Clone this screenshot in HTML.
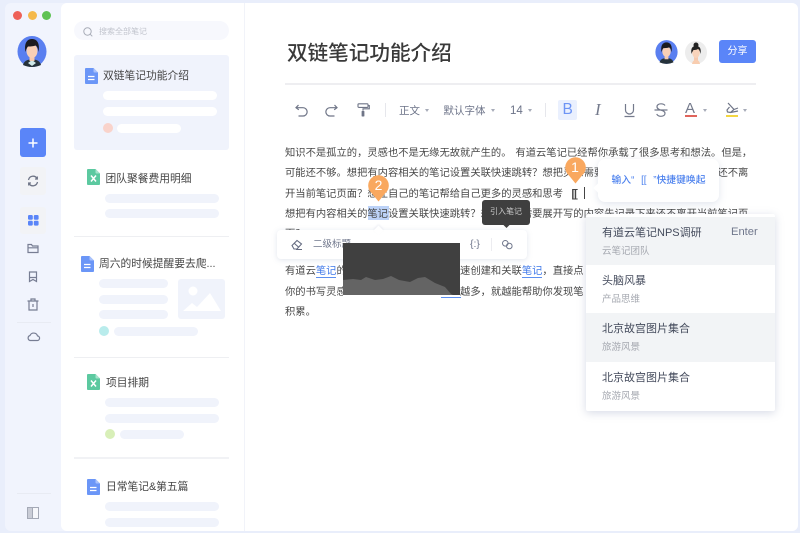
<!DOCTYPE html>
<html lang="zh"><head><meta charset="utf-8"><title>双链笔记功能介绍</title>
<style>
*{box-sizing:border-box;margin:0;padding:0}
html,body{width:800px;height:533px;overflow:hidden;background:#e9eefb}
body{position:relative;font-family:"Liberation Sans","Noto Sans CJK SC",sans-serif;color:#444}
.a{position:absolute}
.t{position:absolute;white-space:nowrap}
.bar{position:absolute;height:9px;border-radius:5px;background:#f0f3fb}
.bw{background:#fff}
.dot{position:absolute;width:10px;height:10px;border-radius:50%}
.name{position:absolute;white-space:nowrap;font-size:10.75px;line-height:16px;color:#444}
.hr{position:absolute;left:74px;width:155px;height:1px;background:#eeeff2}
.doc{position:absolute}
.l{position:absolute;left:285px;white-space:nowrap;font-size:10.3px;line-height:16px;color:#484848}
.lk{color:#3f78e8;border-bottom:1px solid #5c8ff0}
.tb{position:absolute;white-space:nowrap;font-size:10.5px;line-height:14px;color:#6c7388}
.tri{display:inline-block;width:0;height:0;border:2.5px solid transparent;border-top:3.5px solid #a6abb8;border-bottom:0;margin-left:5px;vertical-align:2px}
.mi{position:absolute;left:586px;width:189px;height:49px}
.m1{position:absolute;left:16px;top:8px;white-space:nowrap;font-size:11px;line-height:16px;color:#444b5c}
.m2{position:absolute;left:16px;top:28px;white-space:nowrap;font-size:9.5px;line-height:13px;color:#a5a8b0}
svg{display:block;overflow:visible}
</style></head><body>

<!-- window -->
<div class="a" style="left:5px;top:3px;width:793px;height:528px;background:#f1f4fd;border-radius:6px"></div>
<div class="a" style="left:61px;top:3px;width:184px;height:528px;background:#fff;border-radius:6px 0 0 6px"></div>
<div class="a" style="left:245px;top:3px;width:553px;height:528px;background:#fff;border-radius:0 6px 6px 0"></div>
<div class="a" style="left:244px;top:3px;width:1px;height:528px;background:#f1f3f9"></div>

<!-- traffic lights -->
<div class="a" style="left:13px;top:11px;width:9px;height:9px;border-radius:50%;background:#ee6158"></div>
<div class="a" style="left:27.5px;top:11px;width:9px;height:9px;border-radius:50%;background:#f5b94b"></div>
<div class="a" style="left:42px;top:11px;width:9px;height:9px;border-radius:50%;background:#5fc254"></div>

<!-- avatar -->
<svg class="a" style="left:17px;top:36px" width="30" height="31" viewBox="0 0 30 31">
<ellipse cx="15" cy="15.5" rx="14.5" ry="15.5" fill="#5a7ff0"/>
<path d="M6 29c1-4 4-5.500 9-5.500s8 1.500 9 5.500q-9 4-18 0z" fill="#26323a"/>
<path d="M11 27l4-3 4 3-4 3z" fill="#cfe8e8"/>
<rect x="12.5" y="18" width="5" height="7" fill="#f6c9ae"/>
<ellipse cx="15" cy="15" rx="5.500" ry="7" fill="#f8cfb6"/>
<path d="M8.500 16C7 8 9.500 3 15 3c5.500 0 8 5 6.500 13-.5-3-1-5.500-3-6.500-3 1-6 1-7.500 1-1 1-2 3-2.500 5.500z" fill="#1b1b20"/>
</svg>

<!-- rail buttons -->
<div class="a" style="left:19.5px;top:128px;width:26.5px;height:29px;background:#5a85f8;border-radius:3px"></div>
<svg class="a" style="left:28px;top:138px" width="10" height="10"><path d="M5 .5v9M.5 5h9" stroke="#fff" stroke-width="1.5"/></svg>
<div class="a" style="left:20px;top:167px;width:26px;height:28px;background:#f2f3f6;border-radius:3px"></div>
<svg class="a" style="left:27px;top:175px" width="12" height="12" viewBox="0 0 12 12" fill="none" stroke="#6f7587" stroke-width="1.300"><path d="M1.500 5A4.600 4.600 0 0 1 10 3.500"/><path d="M10.500 7A4.600 4.600 0 0 1 2 8.500"/><path d="M10.300 1.500V4H8M1.700 10.500V8H4"/></svg>
<div class="a" style="left:20px;top:207px;width:26px;height:27px;background:#f2f3f6;border-radius:3px"></div>
<svg class="a" style="left:27.5px;top:215px" width="11" height="11"><rect width="4.800" height="4.800" rx="1.200" fill="#5a85f8"/><rect x="5.800" width="4.800" height="4.800" rx="1.200" fill="#5a85f8"/><rect y="5.800" width="4.800" height="4.800" rx="1.200" fill="#5a85f8"/><rect x="5.800" y="5.800" width="4.800" height="4.800" rx="1.200" fill="#5a85f8"/></svg>
<svg class="a" style="left:27px;top:243px" width="12" height="11" viewBox="0 0 12 11" fill="none" stroke="#777d93" stroke-width="1.200"><path d="M1 9.500V1.500h3.500l1 1.500H11v6.500zM1 4.800h10"/></svg>
<svg class="a" style="left:28px;top:271px" width="10" height="12" viewBox="0 0 10 12" fill="none" stroke="#777d93" stroke-width="1.200"><path d="M1.500 1h7v9.500L5 8.500l-3.500 2zM1.500 6.500h7"/></svg>
<svg class="a" style="left:27px;top:298px" width="12" height="13" viewBox="0 0 12 13" fill="none" stroke="#777d93" stroke-width="1.200"><path d="M.5 3h11M4 3V1h4v2M2 3v9h8V3M6 6v3"/></svg>
<div class="a" style="left:17px;top:322px;width:34px;height:1px;background:#e8ebf3"></div>
<svg class="a" style="left:26.5px;top:331px" width="13" height="11" viewBox="0 0 13 11" fill="none" stroke="#777d93" stroke-width="1.200"><path d="M3 9.500h7a2.300 2.300 0 0 0 .5-4.600A4 4 0 0 0 3 4.500a2.600 2.600 0 0 0 0 5z"/></svg>
<div class="a" style="left:17px;top:493px;width:34px;height:1px;background:#e8ebf3"></div>
<svg class="a" style="left:27px;top:507px" width="12" height="12" viewBox="0 0 12 12"><rect x=".5" y=".5" width="11" height="11" fill="#f6f7fb" stroke="#a4a9b6"/><rect x="1" y="1" width="4" height="10" fill="#c9ccd6"/><path d="M5.500 1v10" stroke="#a4a9b6"/></svg>

<!-- search -->
<div class="a" style="left:74px;top:21px;width:155px;height:19px;border-radius:10px;background:#f7f8fd"></div>
<svg class="a" style="left:83px;top:27px" width="10" height="10" viewBox="0 0 10 10" fill="none" stroke="#a9adb8" stroke-width="1"><circle cx="4.500" cy="4.500" r="3.700"/><path d="M7.300 7.300l2 2"/></svg>
<div class="t" style="left:99px;top:25px;font-size:8px;line-height:13px;color:#c1c4cd">搜索全部笔记</div>

<!-- card 1 -->
<div class="a" style="left:74px;top:55px;width:155px;height:95px;background:#f0f3fc;border-radius:3px"></div>
<svg class="doc" style="left:85px;top:68px" width="13" height="16" viewBox="0 0 13 16"><path d="M1 0h7.500L13 4.500V15a1 1 0 0 1-1 1H1a1 1 0 0 1-1-1V1a1 1 0 0 1 1-1z" fill="#6b96f7"/><path d="M8.500 0L13 4.500H9.500a1 1 0 0 1-1-1z" fill="#a9c2fb"/><path d="M3 8.500h6.500M3 11.500h6.500" stroke="#fff" stroke-width="1.300"/></svg>
<div class="name" style="left:103px;top:68px">双链笔记功能介绍</div>
<div class="bar bw" style="left:103px;top:91px;width:114px"></div>
<div class="bar bw" style="left:103px;top:107px;width:114px"></div>
<div class="dot" style="left:103px;top:123px;background:#f9d3cb"></div>
<div class="bar bw" style="left:117px;top:124px;width:64px"></div>

<!-- card 2 -->
<svg class="doc" style="left:87px;top:169px" width="13" height="16" viewBox="0 0 13 16"><path d="M1 0h7.500L13 4.500V15a1 1 0 0 1-1 1H1a1 1 0 0 1-1-1V1a1 1 0 0 1 1-1z" fill="#5cc9a0"/><path d="M8.500 0L13 4.500H9.500a1 1 0 0 1-1-1z" fill="#a5e3cb"/><path d="M4 6.500l5 6M9 6.500l-5 6" stroke="#fff" stroke-width="1.500"/></svg>
<div class="name" style="left:105.5px;top:171px">团队聚餐费用明细</div>
<div class="bar" style="left:105px;top:194px;width:114px"></div>
<div class="bar" style="left:105px;top:209px;width:114px"></div>
<div class="hr" style="top:236px"></div>

<!-- card 3 -->
<svg class="doc" style="left:81px;top:256px" width="13" height="16" viewBox="0 0 13 16"><path d="M1 0h7.500L13 4.500V15a1 1 0 0 1-1 1H1a1 1 0 0 1-1-1V1a1 1 0 0 1 1-1z" fill="#6b96f7"/><path d="M8.500 0L13 4.500H9.500a1 1 0 0 1-1-1z" fill="#a9c2fb"/><path d="M3 8.500h6.500M3 11.500h6.500" stroke="#fff" stroke-width="1.300"/></svg>
<div class="name" style="left:99px;top:256px">周六的时候提醒要去爬...</div>
<div class="bar" style="left:99px;top:279px;width:69px"></div>
<div class="bar" style="left:99px;top:295px;width:69px"></div>
<div class="bar" style="left:99px;top:310px;width:69px"></div>
<div class="dot" style="left:99px;top:326px;background:#b9ecec"></div>
<div class="bar" style="left:114px;top:327px;width:84px"></div>
<svg class="a" style="left:178px;top:279px" width="47" height="40" viewBox="0 0 47 40"><rect width="47" height="40" rx="3" fill="#f0f3fb"/><circle cx="15" cy="12" r="4.500" fill="#fff"/><path d="M5 32l9-8 5 4 13-14 11 18z" fill="#fff"/></svg>
<div class="hr" style="top:357px"></div>

<!-- card 4 -->
<svg class="doc" style="left:87px;top:374px" width="13" height="16" viewBox="0 0 13 16"><path d="M1 0h7.500L13 4.500V15a1 1 0 0 1-1 1H1a1 1 0 0 1-1-1V1a1 1 0 0 1 1-1z" fill="#5cc9a0"/><path d="M8.500 0L13 4.500H9.500a1 1 0 0 1-1-1z" fill="#a5e3cb"/><path d="M4 6.500l5 6M9 6.500l-5 6" stroke="#fff" stroke-width="1.500"/></svg>
<div class="name" style="left:106px;top:375px">项目排期</div>
<div class="bar" style="left:105px;top:398px;width:114px"></div>
<div class="bar" style="left:105px;top:414px;width:114px"></div>
<div class="dot" style="left:105px;top:429px;background:#d8efb8"></div>
<div class="bar" style="left:120px;top:430px;width:64px"></div>
<div class="hr" style="top:457px;height:2px;background:#f1f2f5"></div>

<!-- card 5 -->
<svg class="doc" style="left:87px;top:479px" width="13" height="16" viewBox="0 0 13 16"><path d="M1 0h7.500L13 4.500V15a1 1 0 0 1-1 1H1a1 1 0 0 1-1-1V1a1 1 0 0 1 1-1z" fill="#6b96f7"/><path d="M8.500 0L13 4.500H9.500a1 1 0 0 1-1-1z" fill="#a9c2fb"/><path d="M3 8.500h6.500M3 11.500h6.500" stroke="#fff" stroke-width="1.300"/></svg>
<div class="name" style="left:106px;top:479px">日常笔记&amp;第五篇</div>
<div class="bar" style="left:105px;top:502px;width:114px"></div>
<div class="bar" style="left:105px;top:518px;width:114px"></div>

<!-- title -->
<div class="t" style="left:287px;top:39px;font-size:20.6px;line-height:30px;color:#3a3a3a;font-weight:500">双链笔记功能介绍</div>
<svg class="a" style="left:655px;top:40px" width="23" height="24" viewBox="0 0 30 31">
<ellipse cx="15" cy="15.5" rx="14.5" ry="15.5" fill="#5a7ff0"/>
<path d="M6 29c1-4 4-5.500 9-5.500s8 1.500 9 5.500q-9 4-18 0z" fill="#26323a"/>
<rect x="12.5" y="18" width="5" height="7" fill="#f6c9ae"/>
<ellipse cx="15" cy="15" rx="5.500" ry="7" fill="#f8cfb6"/>
<path d="M8.500 16C7 8 9.500 3 15 3c5.500 0 8 5 6.500 13-.5-3-1-5.500-3-6.500-3 1-6 1-7.500 1-1 1-2 3-2.500 5.500z" fill="#1b1b20"/>
</svg>
<svg class="a" style="left:685px;top:41px" width="22" height="23" viewBox="0 0 22 23">
<ellipse cx="11" cy="11.5" rx="11" ry="11.500" fill="#ededed"/>
<rect x="9" y="14" width="4" height="7" fill="#f6c9ae"/>
<path d="M7 23c.5-3 2-4 4-4s3.500 1 4 4z" fill="#f8cdb0"/>
<ellipse cx="11" cy="11.500" rx="3.800" ry="5.500" fill="#f8d3bb"/>
<path d="M6.500 13c-1-6 1-8 4.500-8s5.500 2 4.500 8c-.5-3-1.500-4.500-2.500-5-1.500 1-3.500 1-4.500 1-.5 1-1.500 2-2 4z" fill="#222"/>
<circle cx="11" cy="4" r="2.500" fill="#222"/>
</svg>
<div class="a" style="left:719px;top:40px;width:37px;height:23px;background:#5a85f8;border-radius:3px;color:#fff;font-size:10px;line-height:23px;text-align:center">分享</div>
<div class="a" style="left:285px;top:83px;width:471px;height:1.5px;background:#eeeef1"></div>

<!-- toolbar -->
<svg class="a" style="left:295px;top:104px" width="13" height="13" viewBox="0 0 13 13" fill="none" stroke="#6f7587" stroke-width="1.200"><path d="M3.500 1L1 3.700l2.800 2"/><path d="M1.200 3.700H8a4 4 0 0 1 0 8.300H3.500"/></svg>
<svg class="a" style="left:325px;top:104px" width="13" height="13" viewBox="0 0 13 13" fill="none" stroke="#6f7587" stroke-width="1.200"><path d="M9.500 1l2.500 2.700-2.800 2"/><path d="M11.800 3.700H5a4 4 0 0 0 0 8.300h4.500"/></svg>
<svg class="a" style="left:357px;top:103px" width="13" height="14" viewBox="0 0 13 14" fill="none"><rect x="1" y=".8" width="10" height="3.600" rx=".8" stroke="#6f7587" stroke-width="1.100"/><path d="M11 2.500h1.300v3.300H6v2" stroke="#6f7587" stroke-width="1.100"/><rect x="4.600" y="8" width="2.800" height="5.500" rx=".6" fill="#6f7587"/></svg>
<div class="a" style="left:385px;top:103px;width:1px;height:14px;background:#e6e7ec"></div>
<div class="tb" style="left:399px;top:104px">正文<span class="tri"></span></div>
<div class="tb" style="left:443.5px;top:104px">默认字体<span class="tri"></span></div>
<div class="tb" style="left:510px;top:104px;font-size:11.5px">14<span class="tri"></span></div>
<div class="a" style="left:545px;top:103px;width:1px;height:14px;background:#e6e7ec"></div>
<div class="a" style="left:558px;top:100px;width:19px;height:20px;background:#eaf0fe;border-radius:2px"></div>
<div class="t" style="left:562.5px;top:101px;font-size:15.5px;line-height:18px;color:#6d94f5">B</div>
<div class="t" style="left:595px;top:100px;font-size:17px;line-height:20px;color:#747a8c;font-family:'Liberation Serif',serif;font-style:italic">I</div>
<svg class="a" style="left:624px;top:103px" width="11" height="15" viewBox="0 0 11 15" fill="none" stroke="#747a8c" stroke-width="1.200"><path d="M1.500 1v6a4 4 0 0 0 8 0V1M.5 13.500h10"/></svg>
<svg class="a" style="left:654px;top:103px" width="14" height="14" viewBox="0 0 14 14" fill="none" stroke="#747a8c" stroke-width="1.200"><path d="M11 2.500C10 1 8.500.8 7 .8 4.500.8 3 2 3 3.800c0 4.200 8 2.500 8 6.500 0 2-1.800 3-4 3-2 0-3.500-.8-4.300-2.300M.5 7h13"/></svg>
<div class="t" style="left:685px;top:100px;font-size:15px;line-height:17px;color:#747a8c">A</div>
<div class="a" style="left:685px;top:115px;width:12px;height:2px;background:#e0645c"></div>
<span class="tri a" style="left:703px;top:109px;margin:0"></span>
<svg class="a" style="left:726px;top:102px" width="13" height="13" viewBox="0 0 13 13" fill="none" stroke="#6f7587" stroke-width="1.200"><path d="M2 1l6 6.500-3.500 3L1.500 10 1 8l2.500-3M4.500 10.500L12 9M8 7.500l4-1.500"/></svg>
<div class="a" style="left:726px;top:115px;width:12px;height:2px;background:#f3d642"></div>
<span class="tri a" style="left:743px;top:109px;margin:0"></span>

<!-- body text -->
<div class="l" style="top:146px;word-spacing:1px">知识不是孤立的，灵感也不是无缘无故就产生的。 有道云笔记已经帮你承载了很多思考和想法。但是，</div>
<div class="l" style="top:166px">可能还不够。想把有内容相关的笔记设置关联快速跳转？想把灵感需要展开写的内容先记录下来还不离</div>
<div class="l" style="top:187px">开当前笔记页面？想让自己的笔记帮给自己更多的灵感和思考</div>
<div class="t" style="left:571.5px;top:186px;font-size:11px;line-height:16px;color:#444;font-weight:700;letter-spacing:-1px">[[</div>
<div class="a" style="left:583.5px;top:187px;width:1px;height:12px;background:#444"></div>
<div class="a" style="left:368px;top:206px;width:21px;height:14px;background:#bcd2f7"></div>
<div class="l" style="top:207px">想把有内容相关的笔记设置关联快速跳转？想把灵感需要展开写的内容先记录下来还不离开当前笔记页</div>
<div class="l" style="top:227px">面？</div>
<div class="l" style="top:264px">有道云<span class="lk">笔记</span>的双链功能，可以帮助你快速创建和关联<span class="lk">笔记</span>，直接点</div>
<div class="l" style="top:285px">你的书写灵感，让彼此相互链接的笔记越多，就越能帮助你发现笔</div>
<div class="l" style="top:305px">积累。</div>

<!-- floating toolbar -->
<div class="a" style="left:277px;top:229.5px;width:250px;height:29.5px;background:#fff;border-radius:4px;box-shadow:0 1px 6px rgba(120,135,175,.22)"></div>
<div class="a" style="left:374.5px;top:226.5px;width:7px;height:7px;background:#fff;transform:rotate(45deg);box-shadow:-1px -1px 2px rgba(120,135,175,.12)"></div>
<svg class="a" style="left:291px;top:239px" width="12" height="11" viewBox="0 0 12 11" fill="none" stroke="#646b80" stroke-width="1.100"><path d="M1 6.500L6 1.500l4.500 3.500-4.500 5H3zM3.500 4.500L8 8.500M5 10.500h6"/></svg>
<div class="t" style="left:313px;top:238px;font-size:9.5px;line-height:13px;color:#70778c">二级标题</div>
<div class="t" style="left:470px;top:238px;font-size:10.5px;line-height:13px;color:#70778c">{:}</div>
<div class="a" style="left:491px;top:238px;width:1px;height:13px;background:#ececf0"></div>
<svg class="a" style="left:502px;top:240px" width="11" height="10" viewBox="0 0 11 10" fill="none" stroke="#70778c" stroke-width="1"><circle cx="3.300" cy="3.300" r="2.800"/><circle cx="7.300" cy="6" r="2.800"/></svg>

<!-- tooltip -->
<div class="a" style="left:482px;top:200px;width:48px;height:25px;background:#3f3f3f;border-radius:3px"></div>
<div class="a" style="left:503.5px;top:222px;width:5px;height:5px;background:#3f3f3f;transform:rotate(45deg)"></div>
<div class="t" style="left:490px;top:206px;font-size:8px;line-height:12px;color:#c9c9c9">引入笔记</div>

<!-- dark image -->
<svg class="a" style="left:343px;top:243px" width="117" height="52" viewBox="0 0 117 52"><rect width="117" height="52" fill="#404040"/><path d="M0 37L10 36 18 37 23 34 32 37 40 36 48 33 56 37 67 39 75 35 82 34 92 40 102 44 108 51 110 52H0z" fill="#646464"/></svg>
<div class="a" style="left:343px;top:295px;width:117px;height:7px;background:#fff"></div>

<!-- pin 2 -->
<svg class="a" style="left:368px;top:175px" width="21" height="27" viewBox="0 0 21 27"><path d="M10.500 26.500L4 18.500A10.300 10.300 0 1 1 17 18.500z" fill="#f9a85f"/></svg>
<div class="t" style="left:368px;top:176px;width:21px;text-align:center;font-size:14px;line-height:18px;color:#fff">2</div>
<!-- pin 1 -->
<svg class="a" style="left:564.5px;top:157px" width="21" height="27" viewBox="0 0 21 27"><path d="M10.500 26.500L4 18.500A10.300 10.300 0 1 1 17 18.500z" fill="#f9a85f"/></svg>
<div class="t" style="left:564.5px;top:158px;width:21px;text-align:center;font-size:14px;line-height:18px;color:#fff">1</div>

<!-- bubble -->
<div class="a" style="left:598px;top:159px;width:120.5px;height:43px;background:#fff;border-radius:7px;box-shadow:0 2px 8px rgba(120,135,175,.22)"></div>
<div class="a" style="left:594.5px;top:184px;width:8px;height:8px;background:#fff;transform:rotate(45deg)"></div>
<div class="t" style="left:611.5px;top:174px;font-size:9.8px;line-height:14px;color:#4d82ee;font-weight:500;word-spacing:4px">输入“ [[ ”快捷键唤起</div>

<!-- dropdown -->
<div class="a" style="left:586px;top:214px;width:189px;height:196.5px;background:#fff;border-radius:2px;box-shadow:0 2px 9px rgba(110,125,165,.28)"></div>
<div class="mi" style="top:217px;height:48px;background:#f2f4f6">
<div class="m1">有道云笔记NPS调研</div><div class="m2">云笔记团队</div>
<div class="t" style="left:145px;top:7px;font-size:11.2px;line-height:16px;color:#70778c">Enter</div></div>
<div class="mi" style="top:265px;height:48px">
<div class="m1">头脑风暴</div><div class="m2">产品思维</div></div>
<div class="mi" style="top:313px;background:#f2f4f6">
<div class="m1">北京故宫图片集合</div><div class="m2">旅游风景</div></div>
<div class="mi" style="top:362px;height:48px">
<div class="m1">北京故宫图片集合</div><div class="m2">旅游风景</div></div>

<!-- underline under the image -->
<div class="a" style="left:441px;top:296.5px;width:20px;height:1px;background:#5c8ff0"></div>

</body></html>
